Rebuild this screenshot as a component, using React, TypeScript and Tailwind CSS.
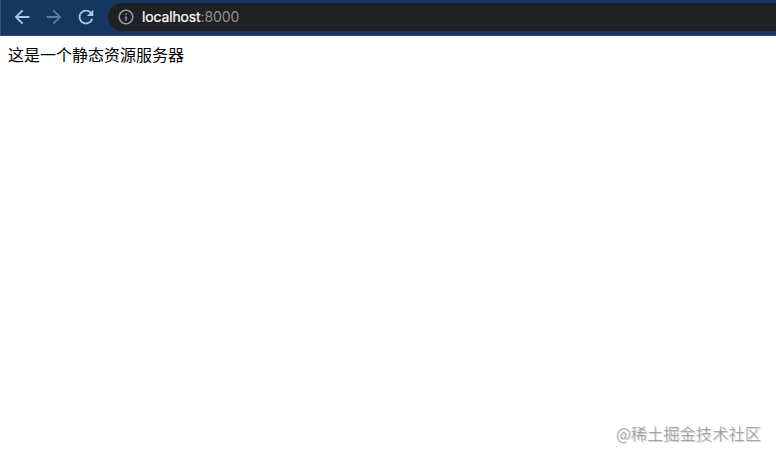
import React from 'react'
import { MdArrowBack, MdArrowForward, MdInfoOutline, MdRefresh } from 'react-icons/md'

const ToolbarButton = ({ icon, className }: { icon: React.ReactNode; className: string }) => (
  <button className={`flex w-[22px] h-[22px] items-center justify-center ${className}`}>{icon}</button>
)

const AddressBar = () => (
  <div className="flex h-7 flex-1 items-center rounded-l-full bg-[#202125] pl-[9px]">
    <MdInfoOutline size={18} className="shrink-0 text-[#9a9da1]" />
    <p className="ml-[7px] text-[14px] leading-5 tracking-[-0.1px] text-[#909296] font-[Inter,sans-serif]">
      <span className="tracking-[-0.15px] text-white [-webkit-text-stroke:0.2px_white]">localhost</span>:8000
    </p>
  </div>
)

const Toolbar = () => (
  <header className="flex h-9 items-start border-b border-l border-b-[#284b70] border-l-[#34557a] bg-[#15375f] pt-[3px] pl-[10px]">
    <div className="flex h-7 items-center gap-[10px]">
      <ToolbarButton icon={<MdArrowBack size={22} />} className="text-[#a4cbf5]" />
      <ToolbarButton icon={<MdArrowForward size={22} />} className="text-[#587ba3]" />
      <ToolbarButton icon={<MdRefresh size={22} />} className="text-[#a4cbf5]" />
    </div>
    <div className="ml-[11px] flex flex-1">
      <AddressBar />
    </div>
  </header>
)

export default function App() {
  return (
    <div className="flex h-screen flex-col overflow-hidden bg-white font-['Noto_Sans_CJK_SC',sans-serif]">
      <Toolbar />
      <main className="flex flex-1 flex-col justify-between">
        <p className="pl-2 pt-1.5 text-base leading-6 text-black">这是一个静态资源服务器</p>
        <p className="self-end pr-[15px] pb-[13px] font-light text-[16.3px] leading-6 text-[#999] [text-shadow:1px_1px_0_#d0d0d0]">
          @稀土掘金技术社区
        </p>
      </main>
    </div>
  )
}
